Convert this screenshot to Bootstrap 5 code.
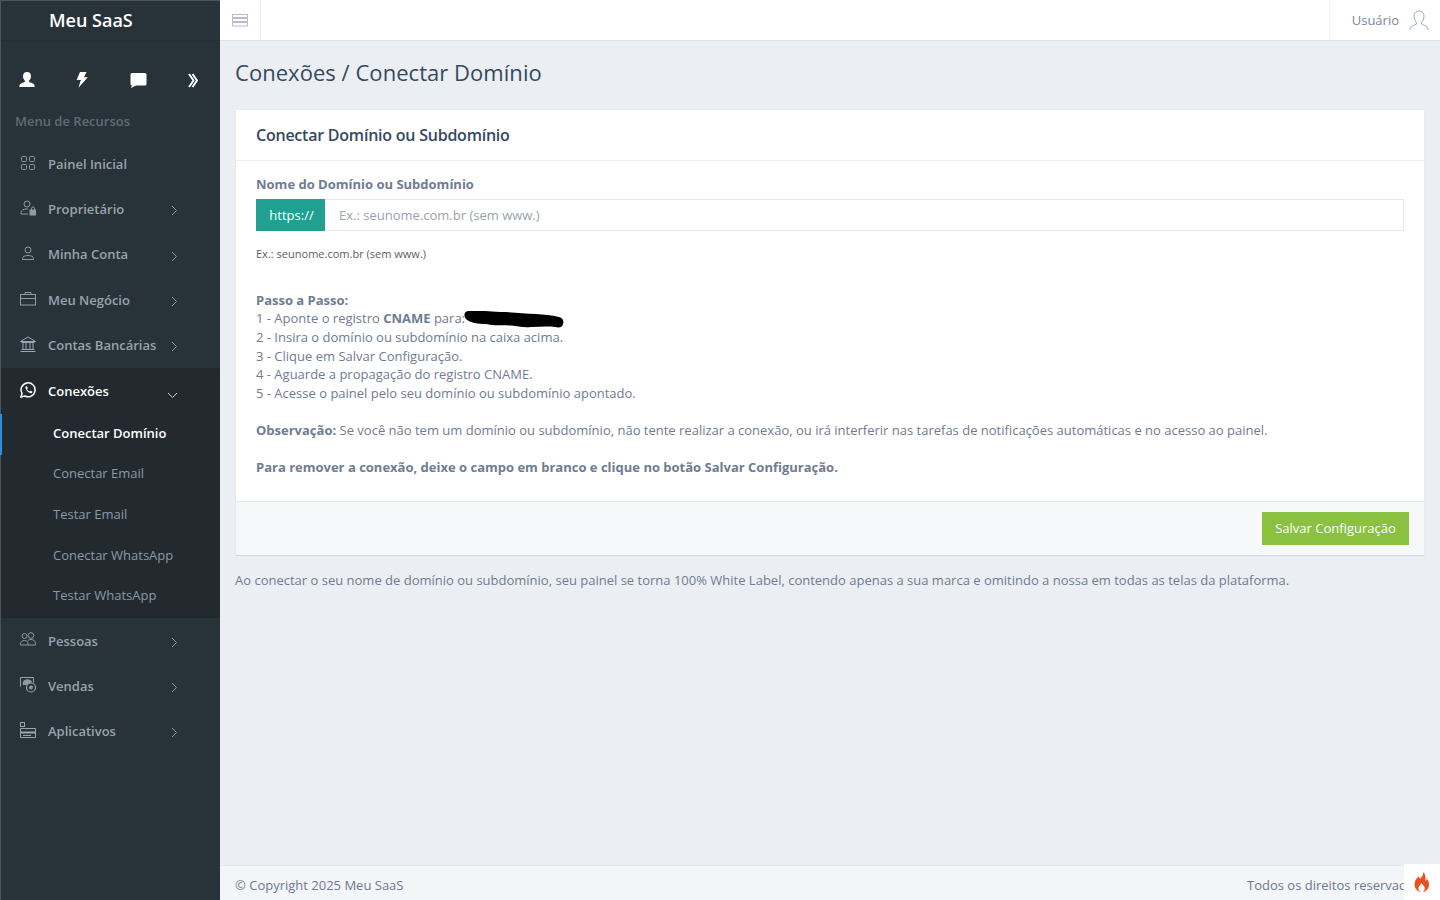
<!DOCTYPE html>
<html lang="pt-BR">
<head>
<meta charset="utf-8">
<title>Conectar Domínio</title>
<link href="https://cdn.jsdelivr.net/npm/bootstrap@5.3.0/dist/css/bootstrap.min.css" rel="stylesheet">
<style>
html,body{height:100%;overflow:hidden}
body{font-family:"Open Sans","Liberation Sans",sans-serif;font-size:13px;line-height:1.42857;color:#6f7c91;background:#ebeff4}
.app-shell{height:900px;width:1440px}
.side-panel{width:220px;flex:none;background:#283239;border-left:1px solid #4a555c;border-top:1px solid #4a555c;color:#98a5b3;position:relative}
.brand-box{height:40px;color:#fff;font-size:18px;font-weight:600;padding-left:48px;line-height:38px;border-bottom:1px solid #252f35}
.quick-row{height:59px;padding:0 22px 0 18px;margin-top:9.5px}
.menu-cap{color:#5f6c78;font-size:13px;font-weight:600;padding-left:14px;height:23px;line-height:23px;margin-bottom:9px}
.menu-line{height:45.3px;padding-left:19px;font-weight:600;color:#97a3ae;position:relative}
.menu-line svg.ico{width:16px;height:16px;flex:none;margin-right:12px;margin-top:-2px}
.chev{position:absolute;left:169.500px;top:50%;margin-top:-4px;width:7px;height:11px}
.menu-open{background:#222a30;border-top:1px solid #20282e;border-bottom:1px solid #20282e}
.menu-open .menu-line{color:#fff;padding-bottom:1px}
.chev-dn{position:absolute;left:166px;top:50%;margin-top:0;width:11px;height:7px}
.sub-line{height:40.6px;padding-left:52px;padding-bottom:3px;color:#8a99a8;font-size:13px;position:relative}
.sub-line.is-on{color:#fff;font-weight:600}
.sub-line.is-on::before{content:"";position:absolute;left:-1px;top:0;bottom:0;width:2px;background:#2a8fe0}
.main-col{flex:1;min-width:0;position:relative}
.top-strip{height:41px;background:#fff;border-bottom:1px solid #dfe3e8}
.burger{width:41px;border-right:1px solid #eceff3}
.user-box{border-left:1px solid #eceff3;padding:0 11px 0 22px;color:#7a889c;gap:10px}
.page-area{flex:1;padding:14px 16px 0 15px}
.page-title{font-size:22px;font-weight:400;color:#34495e;line-height:34px;margin:0 0 21px;letter-spacing:.04px}
.panel-box{background:#fff;border:0;border-radius:0;box-shadow:0 1px 1px rgba(0,0,0,.1);margin-left:1px;margin-bottom:16px}
.panel-head{height:51px;padding:0 20px;background:#fff;border-bottom:1px solid #edf0f3;font-size:16px;font-weight:600;color:#34495e;line-height:50px;letter-spacing:-.23px}
.panel-body{padding:14px 20px 0;height:340px}
.field-label{font-weight:700;color:#6f7c91;margin-bottom:6px;display:block;line-height:18px;height:18px}
.https-tag{background:#20a090;color:#fff;width:69px;flex:none;box-sizing:content-box;padding-left:1px;height:32px;justify-content:center}
.domain-input{height:32px;border:1px solid #e5e9ec;border-left:0;border-radius:0;font-size:13px;padding:0 14px;color:#6f7c91;box-shadow:none}
.domain-input::placeholder{color:#9aa3ad}
.tip-text{font-size:11px;color:#56616e;margin:15px 0 28.7px;line-height:16px;letter-spacing:.01px}
.step-block{margin:0;line-height:18.57px}
.step-block b{font-weight:700}
.blot{display:inline-block;width:100px;height:17px;vertical-align:-5px;margin-left:-1px;margin-top:-4px}
.panel-foot{height:54px;background:#f7f8fa;border-top:1px solid #e7eaee;padding:0 15px 0 0}
.save-btn{background:#8ac140;color:#fff;border:0;border-radius:0;height:33px;width:147px;font-size:13px;padding:0}
.save-btn:hover{background:#8ac140;color:#fff}
.note-line{margin:0}
.foot-strip{height:35px;background:#f3f5f9;border-top:1px solid #e3e6eb;padding:4px 19px 0 15px;color:#6d7b90;position:relative;white-space:nowrap}
.flame-tab{position:absolute;right:0;bottom:0;width:36px;height:36px;background:#fff}
</style>
</head>
<body>
<div class="app-shell d-flex">
  <aside class="side-panel">
    <div class="brand-box">Meu SaaS</div>
    <div class="quick-row d-flex justify-content-between align-items-center">
      <svg width="16" height="16" viewBox="0 0 16 16" fill="#fff"><path d="M8 0c2.500 0 4 1.600 4 4.200 0 1.900-.9 3.500-1.900 4.400v1.300c1.500.7 5 1.400 5.400 3.300l.2 1.800H.3l.2-1.800c.4-1.900 3.900-2.600 5.300-3.300V8.600C4.900 7.700 4 6.100 4 4.200 4 1.600 5.500 0 8 0z"/></svg>
      <svg width="12" height="16" viewBox="0 0 12 16" fill="#fff"><path d="M4 0h6.500L8 5.200h3.800L2.500 15.800 4.800 8H.6z"/></svg>
      <svg width="17" height="15" viewBox="0 0 17 15" fill="#fff"><path d="M2 0h13a1.500 1.500 0 0 1 1.500 1.500v9.500a1.500 1.500 0 0 1-1.500 1.500H6L1 15l.8-2.500A1.500 1.500 0 0 1 .5 11V1.500A1.500 1.500 0 0 1 2 0z"/></svg>
      <svg width="10" height="15" viewBox="0 0 10 15" fill="none" stroke="#fff" stroke-width="2"><path d="M1 1l4.500 6.500L1 14M4.500 1L9 7.500 4.500 14"/></svg>
    </div>
    <div class="menu-cap">Menu de Recursos</div>

    <div class="menu-line d-flex align-items-center">
      <svg class="ico" viewBox="0 0 16 16" fill="none" stroke="#8d99a4"><rect x="1.500" y="1.500" width="5" height="5" rx="1"/><rect x="9.500" y="1.500" width="5" height="5" rx="1"/><rect x="1.500" y="9.500" width="5" height="5" rx="1"/><rect x="9.500" y="9.500" width="5" height="5" rx="1"/></svg>
      Painel Inicial</div>
    <div class="menu-line d-flex align-items-center">
      <svg class="ico" viewBox="0 0 16 16" fill="none" stroke="#8d99a4"><circle cx="7" cy="4" r="3"/><path d="M1 14v-1.500C1 10.500 3.500 9 6 9h2"/><path d="M1 14h7"/><rect x="10" y="10" width="6" height="5" fill="#8d99a4"/><path d="M11.500 10V8.500a1.500 1.500 0 0 1 3 0V10"/></svg>
      Proprietário
      <svg class="chev" viewBox="0 0 7 11" fill="none" stroke="#8d99a4"><path d="M1 1l4.500 4.500L1 10"/></svg></div>
    <div class="menu-line d-flex align-items-center">
      <svg class="ico" viewBox="0 0 16 16" fill="none" stroke="#8d99a4"><circle cx="8" cy="4" r="3"/><path d="M2.500 13.500v-.8C2.500 10.500 5 9.500 8 9.500s5.500 1 5.500 3.200v.8z"/></svg>
      Minha Conta
      <svg class="chev" viewBox="0 0 7 11" fill="none" stroke="#8d99a4"><path d="M1 1l4.500 4.500L1 10"/></svg></div>
    <div class="menu-line d-flex align-items-center">
      <svg class="ico" viewBox="0 0 16 16" fill="none" stroke="#8d99a4"><rect x=".5" y="3.500" width="15" height="10.500"/><path d="M.5 7.500h15M5 3.500V1.500h6v2"/></svg>
      Meu Negócio
      <svg class="chev" viewBox="0 0 7 11" fill="none" stroke="#8d99a4"><path d="M1 1l4.500 4.500L1 10"/></svg></div>
    <div class="menu-line d-flex align-items-center">
      <svg class="ico" viewBox="0 0 16 16" fill="none" stroke="#9aa5af"><path d="M.5 5.500L8 1l7.500 4.500zM1.500 6.500h13M3 7v6M6 7v6M10 7v6M13 7v6M1.500 13.500h13M.5 15.500h15"/></svg>
      Contas Bancárias
      <svg class="chev" viewBox="0 0 7 11" fill="none" stroke="#8d99a4"><path d="M1 1l4.500 4.500L1 10"/></svg></div>

    <div class="menu-open">
      <div class="menu-line d-flex align-items-center">
        <svg class="ico" viewBox="0 0 16 16" fill="none" stroke="#fff" stroke-width="1.500"><path d="M1 15l1-3.700A7 7 0 1 1 4.800 14z"/><path d="M5.500 4.500l1.500-.2.800 2-.8 1c.5 1 1.200 1.700 2.300 2.300l1-.9 2 .9-.3 1.500c-3 .8-7-3.500-6.500-6.600z" fill="#fff" stroke="none"/></svg>
        Conexões
        <svg class="chev-dn" viewBox="0 0 11 7" fill="none" stroke="#c9d0d6"><path d="M1 1l4.500 4.500L10 1"/></svg></div>
      <div class="sub-line is-on d-flex align-items-center">Conectar Domínio</div>
      <div class="sub-line d-flex align-items-center">Conectar Email</div>
      <div class="sub-line d-flex align-items-center">Testar Email</div>
      <div class="sub-line d-flex align-items-center">Conectar WhatsApp</div>
      <div class="sub-line d-flex align-items-center">Testar WhatsApp</div>
    </div>

    <div class="menu-line d-flex align-items-center">
      <svg class="ico" viewBox="0 0 16 16" fill="none" stroke="#8d99a4"><circle cx="4.500" cy="4" r="2.500"/><circle cx="11" cy="3.500" r="2.800"/><path d="M.5 13v-1.500C.5 9.500 2.500 8.500 4.500 8.500s3.500 1 3.500 3V13zM8 13h7.500v-1.500c0-2.500-2-4-4.500-4-1.300 0-2.400.3-3.200 1"/></svg>
      Pessoas
      <svg class="chev" viewBox="0 0 7 11" fill="none" stroke="#8d99a4"><path d="M1 1l4.500 4.500L1 10"/></svg></div>
    <div class="menu-line d-flex align-items-center">
      <svg class="ico" viewBox="0 0 16 16" fill="none" stroke="#9aa5af"><path d="M.5 9.500V.5h13v5"/><path d="M3 8c-1-2 0-5 3-5.500S11 3 12 5L7 8z" fill="#8d99a4" stroke="none"/><circle cx="11" cy="10.500" r="4.500" fill="#283239" stroke-width="1.200"/><circle cx="11" cy="10.500" r="2" fill="#8d99a4" stroke="none"/></svg>
      Vendas
      <svg class="chev" viewBox="0 0 7 11" fill="none" stroke="#8d99a4"><path d="M1 1l4.500 4.500L1 10"/></svg></div>
    <div class="menu-line d-flex align-items-center">
      <svg class="ico" viewBox="0 0 16 16" fill="none" stroke="#9aa5af"><rect x=".5" y=".5" width="4" height="4"/><path d="M.5 6.500h15v9H.5z"/><path d="M.5 10.500h15" stroke-width="2"/><path d="M3 13.500h8"/></svg>
      Aplicativos
      <svg class="chev" viewBox="0 0 7 11" fill="none" stroke="#8d99a4"><path d="M1 1l4.500 4.500L1 10"/></svg></div>
  </aside>

  <div class="main-col d-flex flex-column">
    <header class="top-strip d-flex justify-content-between">
      <div class="burger d-flex align-items-center justify-content-center">
        <svg width="16" height="13" viewBox="0 0 16 13" fill="none" stroke="#b5bdcb"><rect x=".5" y=".5" width="15" height="3"/><rect x=".5" y="4.500" width="15" height="3"/><rect x=".5" y="8.500" width="15" height="3.500"/></svg>
      </div>
      <div class="user-box d-flex align-items-center">
        <span>Usuário</span>
        <svg width="20" height="21" viewBox="0 0 20 21" fill="none" stroke="#a2adbd"><path d="M10 1c3 0 5 2 5 5 0 3-1.500 5.500-2.500 6.500v1.500c2 1 6 2 6.500 5v1M10 1C7 1 5 3 5 6c0 3 1.500 5.500 2.500 6.500v1.500c-2 1-6 2-6.500 5v1"/></svg>
      </div>
    </header>

    <main class="page-area">
      <h1 class="page-title">Conexões / Conectar Domínio</h1>
      <div class="card panel-box">
        <div class="card-header panel-head rounded-0">Conectar Domínio ou Subdomínio</div>
        <div class="card-body panel-body">
          <label class="field-label" for="dom">Nome do Domínio ou Subdomínio</label>
          <div class="input-group">
            <span class="https-tag d-flex align-items-center">https://</span>
            <input id="dom" class="form-control domain-input" type="text" placeholder="Ex.: seunome.com.br (sem www.)">
          </div>
          <p class="tip-text">Ex.: seunome.com.br (sem www.)</p>
          <p class="step-block"><b>Passo a Passo:</b><br>
          1 - Aponte o registro <b>CNAME</b> para:<svg class="blot" viewBox="0 0 100 17"><path d="M4 0C14-.5 24 0 36 1c14 0 24 1.500 36 2 8 .5 15 1 23 3 4 1 5 4 4 7-.5 3-3 4-8 3-8-1-16 0-24 0-8 1-13-1-20-1.500C38 14 30 15 22 13 14 13 6 12 2 8-.5 5 0 .5 4 0z" fill="#000"/></svg><br>
          2 - Insira o domínio ou subdomínio na caixa acima.<br>
          3 - Clique em Salvar Configuração.<br>
          4 - Aguarde a propagação do registro CNAME.<br>
          5 - Acesse o painel pelo seu domínio ou subdomínio apontado.<br><br>
          <b>Observação:</b> Se você não tem um domínio ou subdomínio, não tente realizar a conexão, ou irá interferir nas tarefas de notificações automáticas e no acesso ao painel.<br><br>
          <b>Para remover a conexão, deixe o campo em branco e clique no botão Salvar Configuração.</b></p>
        </div>
        <div class="card-footer panel-foot rounded-0 d-flex align-items-center justify-content-end">
          <button type="button" class="btn save-btn">Salvar Configuração</button>
        </div>
      </div>
      <p class="note-line">Ao conectar o seu nome de domínio ou subdomínio, seu painel se torna 100% White Label, contendo apenas a sua marca e omitindo a nossa em todas as telas da plataforma.</p>
    </main>

    <footer class="foot-strip d-flex justify-content-between align-items-center">
      <span>© Copyright 2025 Meu SaaS</span>
      <span>Todos os direitos reservados</span>
      <div class="flame-tab d-flex align-items-center justify-content-center">
        <svg width="16" height="20" viewBox="0 0 16 20" fill="#e8501f"><path d="M9 0c.7 3-1 4.500-3 6.800C5.200 6 5 5 5.300 4 2.500 6 .5 9 .5 12.500.5 16.500 3.500 19.500 7 20c-2-1-3-2.500-2.500-4.500.4-1.500 2-2.500 2.800-4.500 1.400 1.500 3.700 3.800 3.500 6-.1 1-.7 2-1.800 3 3.700-.7 6-3.800 6-7.500 0-2.500-1-4.500-2.300-6.300 0 1.300-.5 2.300-1.500 2.800C12 5 11.500 2 9 0z"/></svg>
      </div>
    </footer>
  </div>
</div>
<script src="https://cdn.jsdelivr.net/npm/bootstrap@5.3.0/dist/js/bootstrap.bundle.min.js"></script>
</body>
</html>
